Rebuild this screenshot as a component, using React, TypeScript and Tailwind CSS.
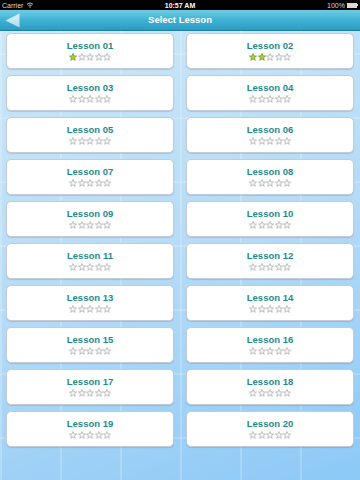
import React from "react";

const lessons = Array.from({ length: 20 }, (_, i) => ({
  title: `Lesson ${String(i + 1).padStart(2, "0")}`,
  stars: i === 0 ? 1 : i === 1 ? 2 : 0,
}));

const Star: React.FC<{ on: boolean }> = ({ on }) => (
  <svg width="8" height="8" viewBox="0 0 10 10">
    <polygon
      points="5,0.6 6.3,3.6 9.5,3.8 7,5.9 7.8,9.2 5,7.4 2.2,9.2 3,5.9 0.5,3.8 3.7,3.6"
      fill={on ? "#a8cf3c" : "#f4f4f4"}
      stroke={on ? "#6f8f22" : "#adadad"}
      strokeWidth="0.9"
      strokeLinejoin="round"
    />
  </svg>
);

const App: React.FC = () => {
  return (
    <div className="w-[360px] h-[480px] flex flex-col overflow-hidden font-['Liberation_Sans',Arial,sans-serif]">
      <div className="h-[10px] bg-black flex items-center justify-between px-[2px] text-[7px] leading-none text-[#d8d8d8]">
        <div className="flex items-center gap-[3px] w-[60px]">
          <span>Carrier</span>
          <svg width="8" height="6" viewBox="0 0 10 8">
            <path d="M1 3 Q5 -0.5 9 3" stroke="#d8d8d8" strokeWidth="1.2" fill="none" />
            <path d="M2.8 4.8 Q5 3 7.2 4.8" stroke="#d8d8d8" strokeWidth="1.2" fill="none" />
            <circle cx="5" cy="6.6" r="0.9" fill="#d8d8d8" />
          </svg>
        </div>
        <span className="font-bold text-white">10:57 AM</span>
        <div className="flex items-center justify-end gap-[2px] w-[60px]">
          <span>100%</span>
          <div className="flex items-center">
            <div className="w-[10px] h-[5px] bg-[#d8d8d8] border border-[#d8d8d8]" />
            <div className="w-[1px] h-[2px] bg-[#d8d8d8]" />
          </div>
        </div>
      </div>

      <div className="h-[21px] grid grid-cols-[40px_1fr_40px] items-center bg-gradient-to-b from-[#6ccde3] via-[#3fb2d4] to-[#2a9cc4] border-b border-[#1f7fa3]">
        <div className="pl-[5px] flex items-center">
          <svg width="15" height="15" viewBox="0 0 15 15">
            <defs>
              <linearGradient id="bk" x1="0" y1="0" x2="0" y2="1">
                <stop offset="0" stopColor="#eaf6fb" />
                <stop offset="1" stopColor="#bde3f1" />
              </linearGradient>
            </defs>
            <polygon points="0.5,7.5 14.5,0.5 14.5,14.5" fill="url(#bk)" opacity="0.9" />
          </svg>
        </div>
        <div className="text-center text-white font-bold text-[9.5px]">Select Lesson</div>
        <div />
      </div>

      <div className="flex-1 px-[6px] pt-[2px] bg-[linear-gradient(90deg,rgba(255,255,255,0.2)_2px,transparent_2px),linear-gradient(rgba(255,255,255,0.18)_2px,transparent_2px),linear-gradient(160deg,#cbe7f8_0%,#b6dbf6_50%,#8cc9f6_100%)] bg-[size:60px_64px,60px_64px,100%_100%] bg-[position:0px_0px,0px_22px,0_0]">
        <div className="grid grid-cols-2 gap-x-[12px] gap-y-[6px] auto-rows-[36px]">
          {lessons.map((l) => (
            <div
              key={l.title}
              className="bg-white rounded-[5px] border border-[#c3ccd6] shadow-[0_1px_1px_rgba(0,0,0,0.12)] flex flex-col items-center justify-center gap-[3px]"
            >
              <span className="text-[9.5px] font-bold leading-none text-[#1f8a8c]">{l.title}</span>
              <div className="flex gap-[0.5px]">
                {[0, 1, 2, 3, 4].map((s) => (
                  <Star key={s} on={s < l.stars} />
                ))}
              </div>
            </div>
          ))}
        </div>
      </div>
    </div>
  );
};

export default App;
